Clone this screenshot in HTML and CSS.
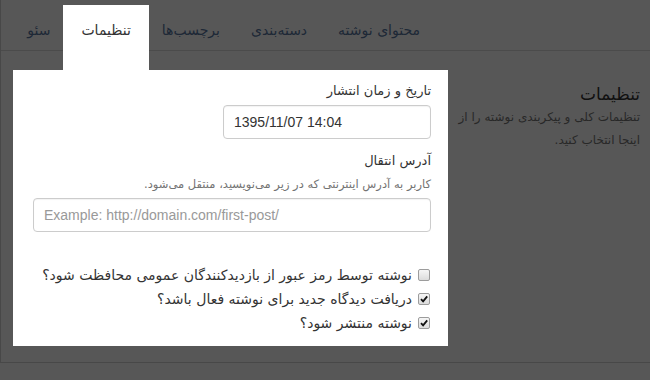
FILE: index.html
```html
<!DOCTYPE html>
<html lang="fa" dir="rtl">
<head>
    <meta charset="UTF-8">
    <meta name="viewport" content="width=device-width, initial-scale=1.0">
    <title>تنظیمات نوشته</title>
    <link rel="stylesheet" href="styles.css">
</head>
<body>
    <div class="page">
        <nav class="tabs">
            <a class="tab" href="#">محتوای نوشته</a>
            <a class="tab" href="#">دسته‌بندی</a>
            <a class="tab" href="#">برچسب‌ها</a>
            <a class="tab active" href="#">تنظیمات</a>
            <a class="tab" href="#">سئو</a>
        </nav>
        <div class="content">
            <aside class="info">
                <h3>تنظیمات</h3>
                <p>تنظیمات کلی و پیکربندی نوشته را از اینجا انتخاب کنید.</p>
            </aside>
            <form class="panel">
                <div class="field">
                    <label for="date">تاریخ و زمان انتشار</label>
                    <input type="text" id="date" class="input short" value="1395/11/07 14:04">
                </div>
                <div class="field">
                    <label for="redirect">آدرس انتقال</label>
                    <p class="help">کاربر به آدرس اینترنتی که در زیر می‌نویسید، منتقل می‌شود.</p>
                    <input type="text" id="redirect" class="input" placeholder="Example: http://domain.com/first-post/">
                </div>
                <div class="checks">
                    <label class="check">
                        <span class="box"></span>
                        نوشته توسط رمز عبور از بازدیدکنندگان عمومی محافظت شود؟
                    </label>
                    <label class="check">
                        <span class="box"><svg viewBox="0 0 10 10"><path d="M2 5.2 L4.1 7.4 L8.2 2.4" /></svg></span>
                        دریافت دیدگاه جدید برای نوشته فعال باشد؟
                    </label>
                    <label class="check">
                        <span class="box"><svg viewBox="0 0 10 10"><path d="M2 5.2 L4.1 7.4 L8.2 2.4" /></svg></span>
                        نوشته منتشر شود؟
                    </label>
                </div>
            </form>
        </div>
    </div>
    <div class="overlay"></div>
</body>
</html>
```

FILE: styles.css
```css
* {
    margin: 0;
    padding: 0;
    box-sizing: border-box;
}

body {
    background-color: #fff;
    font-family: "DejaVu Sans", sans-serif;
    font-size: 13px;
    color: #333;
    overflow: hidden;
}

.page {
    height: 363px;
    border-left: 1px solid #d4d4d4;
    border-bottom: 1px solid #d4d4d4;
}

/* tabs */
.tabs {
    display: flex;
    height: 51px;
    padding-top: 10px;
    padding-right: 217px;
    border-bottom: 1px solid #ddd;
}

.tab {
    display: block;
    height: 41px;
    padding: 0 12px;
    margin-left: 5px;
    line-height: 39px;
    font-size: 14px;
    color: #58769f;
    text-decoration: none;
    white-space: nowrap;
    border: 1px solid transparent;
    border-radius: 4px 4px 0 0;
}

.tab.active {
    position: relative;
    z-index: 11;
    color: #333;
    background: #fff;
    border-color: #ddd;
    border-bottom-color: #fff;
}

.tab.active::before {
    content: "";
    position: absolute;
    top: -6px;
    left: -6px;
    right: -6px;
    bottom: -20px;
    background: #fff;
    z-index: -1;
}

/* content */
.content {
    display: flex;
    margin-top: 19px;
    padding-left: 12px;
}

.info {
    flex: 1;
    padding: 12px 10px 0 6px;
}

.info h3 {
    font-size: 17px;
    font-weight: normal;
    line-height: 24px;
    color: #333;
}

.info p {
    font-size: 12px;
    line-height: 23px;
    color: #777;
}

.panel {
    position: relative;
    z-index: 11;
    width: 435px;
    padding: 12px 17px 11px 20px;
    background: #fff;
}

.field label {
    display: block;
    line-height: 18px;
    margin-bottom: 5px;
}

.field + .field {
    margin-top: 13px;
}

.help {
    font-size: 11.5px;
    line-height: 16px;
    color: #737373;
    margin-top: 6px;
    margin-bottom: 6px;
}

.input {
    display: block;
    width: 100%;
    height: 34px;
    padding: 6px 10px;
    font-family: "Liberation Sans", Arial, sans-serif;
    font-size: 14px;
    color: #333;
    direction: ltr;
    border: 1px solid #ccc;
    border-radius: 4px;
    box-shadow: inset 0 1px 1px rgba(0, 0, 0, 0.05);
    outline: none;
}

.input::placeholder {
    color: #999;
}

.input.short {
    width: 208px;
}

.checks {
    margin-top: 31px;
}

.check {
    display: flex;
    align-items: center;
    gap: 6px;
    height: 24px;
    font-size: 14px;
    color: #333;
    white-space: nowrap;
}

.box {
    display: flex;
    align-items: center;
    justify-content: center;
    width: 12px;
    height: 12px;
    flex-shrink: 0;
    margin-right: 1px;
    border: 1px solid #9c9c9c;
    border-radius: 2px;
    background: linear-gradient(#f6f6f6, #dcdcdc);
}

.box svg {
    width: 10px;
    height: 10px;
}

.box path {
    fill: none;
    stroke: #111;
    stroke-width: 1.8;
}

.overlay {
    position: fixed;
    top: 0;
    left: 0;
    right: 0;
    bottom: 0;
    background: rgba(0, 0, 0, 0.66);
    z-index: 10;
}
```
